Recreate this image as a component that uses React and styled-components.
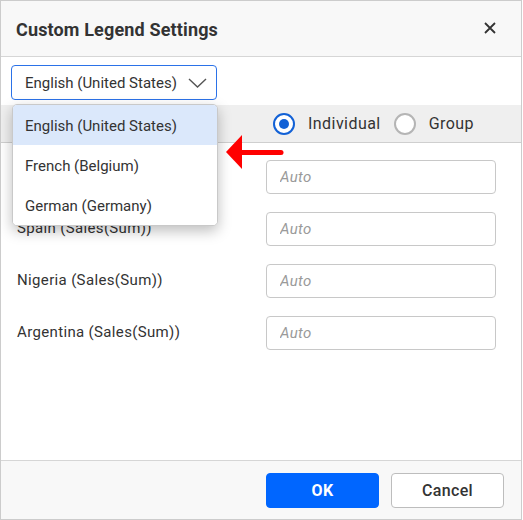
import React, { useState } from "react";
import styled, { createGlobalStyle } from "styled-components";

const GlobalStyle = createGlobalStyle`
  html, body {
    margin: 0;
    padding: 0;
    background: #fff;
  }
  * {
    box-sizing: border-box;
  }
  body {
    font-family: Roboto, "Liberation Sans", Arial, sans-serif;
    color: #333;
  }
`;

const languages = ["English (United States)", "French (Belgium)", "German (Germany)"];

const legendRows = [
    "Germany (Sales(Sum))",
    "Spain (Sales(Sum))",
    "Nigeria (Sales(Sum))",
    "Argentina (Sales(Sum))",
];

const App = () => {
    const [language, setLanguage] = useState(languages[0]);
    const [mode, setMode] = useState("individual");

    return (
        <>
            <GlobalStyle />
            <Dialog>
                <Header>
                    <Title>Custom Legend Settings</Title>
                    <CloseButton aria-label="Close">
                        <svg width="12" height="12" viewBox="0 0 12 12">
                            <path d="M1 1 L11 11 M11 1 L1 11" stroke="#333" strokeWidth="1.8" />
                        </svg>
                    </CloseButton>
                </Header>

                <Body>
                    <Toolbar>
                        <Select>
                            <span>{language}</span>
                            <svg width="19" height="10" viewBox="0 0 19 10">
                                <path d="M1 1 L9.5 9 L18 1" fill="none" stroke="#555" strokeWidth="1.4" />
                            </svg>
                        </Select>
                    </Toolbar>

                    <ModeBand>
                        <RadioOption onClick={() => setMode("individual")}>
                            <RadioCircle $checked={mode === "individual"} />
                            Individual
                        </RadioOption>
                        <RadioOption onClick={() => setMode("group")}>
                            <RadioCircle $checked={mode === "group"} />
                            Group
                        </RadioOption>
                    </ModeBand>

                    <Rows>
                        {legendRows.map((row) => (
                            <Row key={row}>
                                <RowLabel>{row}</RowLabel>
                                <TextInput placeholder="Auto" />
                            </Row>
                        ))}
                    </Rows>

                    {/* open language list, drawn over the rows */}
                    <Popup>
                        {languages.map((lang) => (
                            <PopupItem
                                key={lang}
                                $active={lang === language}
                                onClick={() => setLanguage(lang)}
                            >
                                {lang}
                            </PopupItem>
                        ))}
                    </Popup>

                    <Arrow width="60" height="36" viewBox="0 0 60 36">
                        <polygon points="1,18 17,1 17,35" fill="#f00" />
                        <line x1="16" y1="18.5" x2="56" y2="18.5" stroke="#f00" strokeWidth="5" strokeLinecap="round" />
                    </Arrow>
                </Body>

                <Footer>
                    <Button $primary>OK</Button>
                    <Button>Cancel</Button>
                </Footer>
            </Dialog>
        </>
    );
};

const Dialog = styled.div`
    width: 522px;
    height: 520px;
    border: 1px solid #ccc;
    display: flex;
    flex-direction: column;
    background: #fff;
`;

const Header = styled.div`
    height: 56px;
    flex-shrink: 0;
    display: flex;
    align-items: center;
    justify-content: space-between;
    padding: 0 25px 0 15px;
    background: #f8f8f8;
    border-bottom: 1px solid #d6d6d6;
`;

const Title = styled.h1`
    margin: 0;
    padding-top: 2px;
    font-size: 18px;
    font-weight: 700;
    letter-spacing: 0.15px;
    color: #333;
`;

const CloseButton = styled.button`
    border: none;
    background: none;
    padding: 0;
    margin-top: -2px;
    display: flex;
    cursor: pointer;
`;

const Body = styled.div`
    flex: 1;
    position: relative;
`;

const Toolbar = styled.div`
    padding: 8px 10px 5px;
`;

const Select = styled.div`
    width: 206px;
    height: 35px;
    border: 1px solid #2b72e8;
    border-radius: 4px;
    display: flex;
    align-items: center;
    justify-content: space-between;
    padding: 0 9px 0 13px;
    font-size: 15px;
    color: #333;
    cursor: pointer;
`;

const ModeBand = styled.div`
    height: 38px;
    background: #efefef;
    border-bottom: 1px solid #cfcfcf;
    display: flex;
    align-items: center;
    gap: 13px;
    padding-left: 272px;
`;

const RadioOption = styled.label`
    display: flex;
    align-items: center;
    gap: 13px;
    font-size: 16px;
    letter-spacing: 0.45px;
    color: #333;
    cursor: pointer;
`;

const RadioCircle = styled.span`
    width: 22px;
    height: 22px;
    border-radius: 50%;
    background: #fff;
    border: 2px solid ${(p) => (p.$checked ? "#1261d6" : "#b5b5b5")};
    display: flex;
    align-items: center;
    justify-content: center;

    &::after {
        content: "";
        width: 10px;
        height: 10px;
        border-radius: 50%;
        background: ${(p) => (p.$checked ? "#1261d6" : "transparent")};
    }
`;

const Rows = styled.div`
    display: flex;
    flex-direction: column;
    gap: 18px;
    padding: 17px 25px 0 16px;
`;

const Row = styled.div`
    height: 34px;
    display: flex;
    align-items: center;
    justify-content: space-between;
`;

const RowLabel = styled.span`
    font-size: 15px;
    letter-spacing: 0.35px;
    color: #333;
    margin-top: -3px;
`;

const TextInput = styled.input`
    width: 230px;
    height: 34px;
    border: 1px solid #c8c8c8;
    border-radius: 4px;
    padding: 0 13px;
    font-family: inherit;
    font-size: 15px;
    letter-spacing: 0.3px;
    color: #333;
    outline: none;

    &::placeholder {
        color: #9a9a9a;
        font-style: italic;
    }
`;

const Popup = styled.div`
    position: absolute;
    top: 47px;
    left: 11px;
    width: 206px;
    border: 1px solid #c9c9c9;
    border-radius: 5px;
    background: #fff;
    overflow: hidden;
    box-shadow: 0 5px 14px rgba(0, 0, 0, 0.26);
`;

const PopupItem = styled.div`
    height: 40px;
    display: flex;
    align-items: center;
    padding: 2px 0 0 12px;
    font-size: 15px;
    color: #333;
    background: ${(p) => (p.$active ? "#dbe8fb" : "#fff")};
    cursor: pointer;
`;

const Arrow = styled.svg`
    position: absolute;
    left: 224px;
    top: 77px;
`;

const Footer = styled.div`
    height: 59px;
    flex-shrink: 0;
    background: #f8f8f8;
    border-top: 1px solid #d6d6d6;
    display: flex;
    justify-content: flex-end;
    gap: 12px;
    padding: 12px 17px 0 0;
`;

const Button = styled.button`
    width: 113px;
    height: 35px;
    border-radius: 4px;
    font-family: inherit;
    font-size: 16px;
    font-weight: ${(p) => (p.$primary ? 700 : 500)};
    letter-spacing: 0.3px;
    color: ${(p) => (p.$primary ? "#fff" : "#333")};
    background: ${(p) => (p.$primary ? "#0066ff" : "#fff")};
    border: 1px solid ${(p) => (p.$primary ? "#0066ff" : "#bdbdbd")};
    cursor: pointer;
`;

export default App;
